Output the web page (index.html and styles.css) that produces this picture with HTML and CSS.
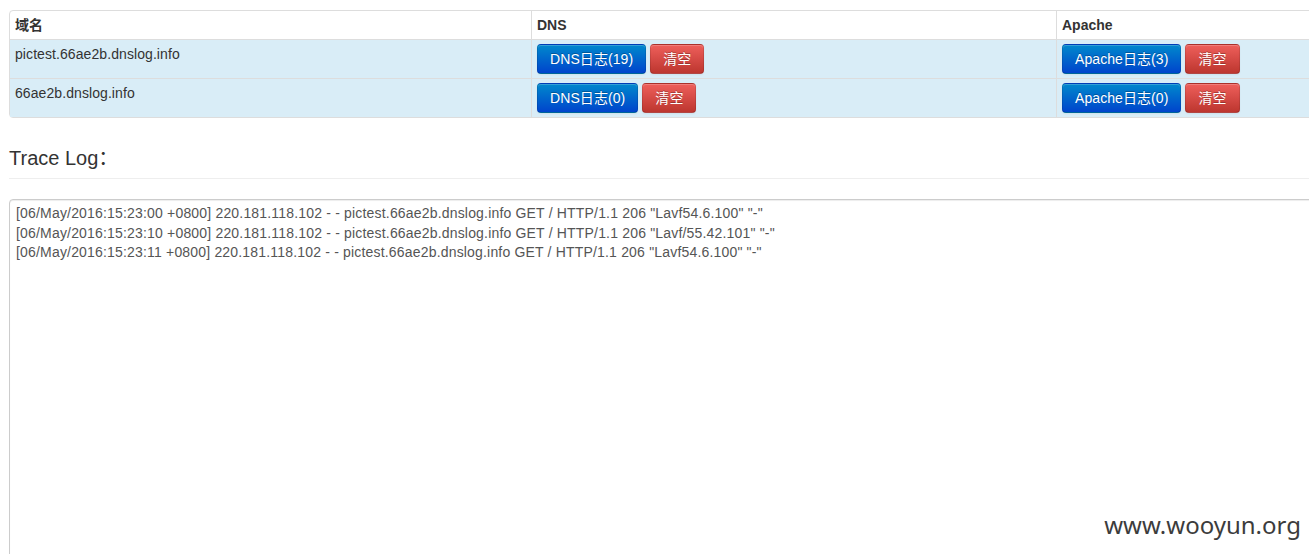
FILE: index.html
```html
<!DOCTYPE html>
<html lang="zh-CN">
<head>
<meta charset="utf-8">
<title>DNSLog</title>
<link rel="stylesheet" href="styles.css">
</head>
<body>
<div class="page">
  <table class="domains">
    <colgroup>
      <col class="c-domain">
      <col class="c-dns">
      <col class="c-apache">
    </colgroup>
    <thead>
      <tr>
        <th>域名</th>
        <th>DNS</th>
        <th>Apache</th>
      </tr>
    </thead>
    <tbody>
      <tr>
        <td>pictest.66ae2b.dnslog.info</td>
        <td><a class="btn btn-primary">DNS日志(19)</a> <a class="btn btn-danger">清空</a></td>
        <td><a class="btn btn-primary">Apache日志(3)</a> <a class="btn btn-danger">清空</a></td>
      </tr>
      <tr>
        <td>66ae2b.dnslog.info</td>
        <td><a class="btn btn-primary">DNS日志(0)</a> <a class="btn btn-danger">清空</a></td>
        <td><a class="btn btn-primary">Apache日志(0)</a> <a class="btn btn-danger">清空</a></td>
      </tr>
    </tbody>
  </table>

  <h3 class="section-title">Trace Log：</h3>
  <hr class="divider">

  <div class="log">[06/May/2016:15:23:00 +0800] 220.181.118.102 - - pictest.66ae2b.dnslog.info GET / HTTP/1.1 206 "Lavf54.6.100" "-"
[06/May/2016:15:23:10 +0800] 220.181.118.102 - - pictest.66ae2b.dnslog.info GET / HTTP/1.1 206 "Lavf/55.42.101" "-"
[06/May/2016:15:23:11 +0800] 220.181.118.102 - - pictest.66ae2b.dnslog.info GET / HTTP/1.1 206 "Lavf54.6.100" "-"</div>
</div>
<div class="watermark">www.wooyun.org</div>
</body>
</html>
```

FILE: styles.css
```css
html, body {
  margin: 0;
  padding: 0;
  overflow: hidden;
  background: #fff;
}

body {
  font-family: "Liberation Sans", "Noto Sans CJK SC", Arial, sans-serif;
  font-size: 14px;
  line-height: 20px;
  color: #333;
  width: 1309px;
  height: 554px;
  position: relative;
}

.page {
  padding: 10px 0 0 9px;
  width: 1600px;
}

.domains {
  width: 1580px;
  table-layout: fixed;
  border-collapse: separate;
  border-spacing: 0;
  border: 1px solid #ddd;
  border-radius: 4px;
}

.c-domain { width: 521px; }
.c-dns { width: 525px; }

.domains th,
.domains td {
  padding: 4px 5px;
  text-align: left;
  vertical-align: top;
  line-height: 20px;
}

.domains td {
  letter-spacing: 0.08px;
}

.domains th {
  font-weight: bold;
  color: #333;
}

.domains th + th,
.domains td + td {
  border-left: 1px solid #ddd;
}

.domains tbody td {
  border-top: 1px solid #ddd;
  background: #d9edf7;
}

.btn {
  display: inline-block;
  padding: 4px 12px;
  font-size: 14px;
  line-height: 20px;
  color: #fff;
  text-align: center;
  text-shadow: 0 -1px 0 rgba(0, 0, 0, 0.25);
  border: 1px solid;
  border-color: rgba(0, 0, 0, 0.1) rgba(0, 0, 0, 0.1) rgba(0, 0, 0, 0.25);
  border-radius: 4px;
  box-shadow: inset 0 1px 0 rgba(255, 255, 255, 0.2), 0 1px 2px rgba(0, 0, 0, 0.05);
  cursor: pointer;
  vertical-align: middle;
}

.btn-primary {
  background-color: #006dcc;
  background-image: linear-gradient(to bottom, #0088cc, #0044cc);
}

.btn-danger {
  background-color: #da4f49;
  background-image: linear-gradient(to bottom, #ee5f5b, #bd362f);
}

.section-title {
  margin: 29px 0 0;
  font-size: 20px;
  line-height: 22px;
  font-weight: normal;
  color: #333;
}

.divider {
  margin: 9px 0 20px;
  border: 0;
  border-top: 1px solid #eee;
  height: 0;
}

.log {
  height: 400px;
  padding: 4px 6px;
  border: 1px solid #ccc;
  border-radius: 4px;
  box-shadow: inset 0 1px 1px rgba(0, 0, 0, 0.075);
  white-space: pre;
  font-size: 14px;
  line-height: 19.5px;
  letter-spacing: 0.18px;
  color: #555;
}

.watermark {
  position: absolute;
  right: 8px;
  top: 509px;
  font-family: "Noto Sans", "Open Sans", sans-serif;
  font-size: 24px;
  line-height: 32px;
  color: #3c3c3c;
}
```
